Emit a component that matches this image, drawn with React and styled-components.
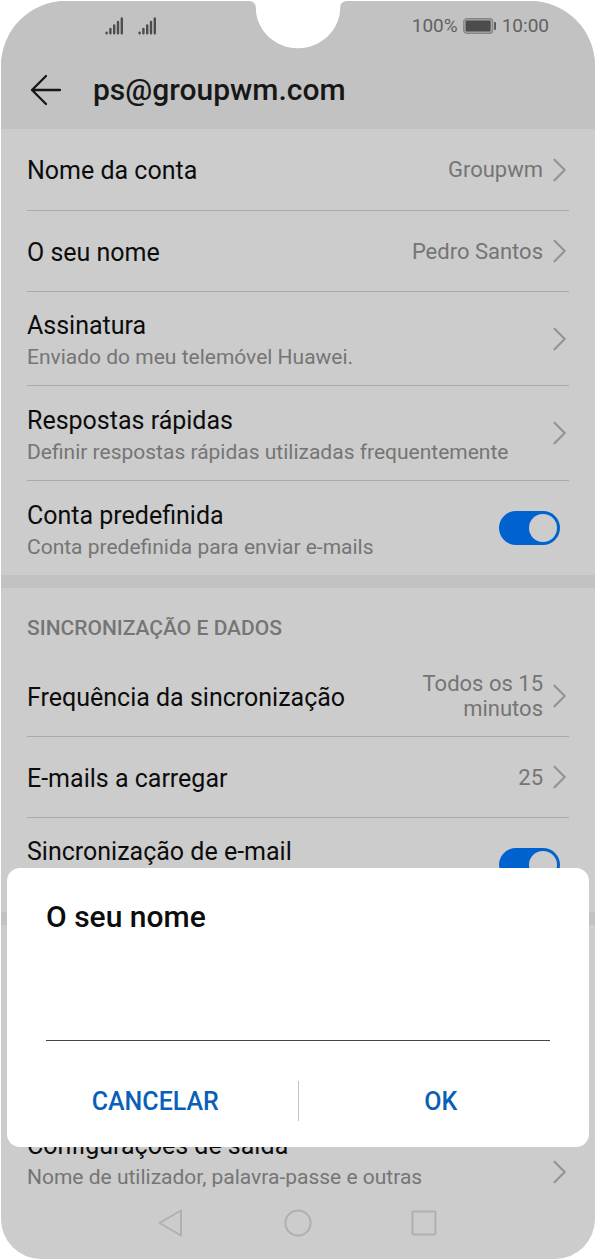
import React, { useState } from "react";
import styled, { createGlobalStyle } from "styled-components";

const Global = createGlobalStyle`
  * { box-sizing: border-box; }
  body { margin: 0; background: #fff; font-family: Roboto, "Liberation Sans", sans-serif; }
  button, input { font: inherit; }
  button { border: 0; background: none; padding: 0; color: inherit; cursor: pointer; }
  svg { display: block; flex: none; }
`;

const Phone = styled.div`
  position: relative;
  display: flex;
  flex-direction: column;
  height: calc(100vh - 2px);
  margin: 1px;
  overflow: hidden;
  background: #ccc;
  border-radius: 65px 65px 40px 40px;
`;

const Top = styled.header`
  flex: none;
  background: #c2c2c2;
`;

const StatusBar = styled.div`
  display: flex;
  align-items: center;
  justify-content: space-between;
  height: 49px;
  padding: 0 46px 0 104px;
  font-size: 19px;
  line-height: 24px;
  color: #616161;
`;

const StatusGroup = styled.div`
  display: flex;
  align-items: center;
  gap: ${(p) => p.$gap}px;
`;

const Notch = styled.div`
  position: absolute;
  top: -1px;
  left: 0;
  right: 0;
  display: flex;
  justify-content: center;
`;

const TitleBar = styled.div`
  display: flex;
  align-items: center;
  gap: 31px;
  height: 79px;
  padding: 0 29px;
`;

const PageTitle = styled.h1`
  margin: 0;
  font-size: 30px;
  line-height: 36px;
  font-weight: 500;
  color: #171717;
`;

const Scroll = styled.main`
  flex: 1;
  min-height: 0;
  overflow: hidden;
`;

const Section = styled.section`
  padding: 0 26px;
  border-bottom: ${(p) => (p.$last ? 0 : 13)}px solid #c2c2c2;
`;

const SectionTitle = styled.h2`
  margin: 0;
  padding: 26px 0 14px;
  min-height: 68px;
  font-size: 21px;
  line-height: 28px;
  font-weight: 500;
  color: #757575;
`;

const RowButton = styled.button`
  display: flex;
  align-items: center;
  gap: 10px;
  width: 100%;
  min-height: ${(p) => p.$height || 81}px;
  padding: 15px 3px 15px 0;
  border-bottom: ${(p) => (p.$plain ? 0 : 1)}px solid #aaa;
  text-align: left;
`;

const SwitchRow = styled(RowButton).attrs({ as: "label" })`
  padding-right: 9px;
`;

const Texts = styled.span`
  flex: 1;
  align-self: ${(p) => (p.$top ? "flex-start" : "center")};
  display: flex;
  flex-direction: column;
  gap: 3px;
`;

const Label = styled.span`
  padding-top: 3px;
  font-size: 25px;
  line-height: 32px;
  color: #0c0c0c;
`;

const Sub = styled.span`
  font-size: 21px;
  line-height: 25px;
  color: #757575;
`;

const Value = styled(Sub)`
  max-width: 140px;
  font-size: 22px;
  text-align: right;
`;

const Toggle = styled.input.attrs({ type: "checkbox" })`
  appearance: none;
  flex: none;
  width: 61px;
  height: 34px;
  margin: 0;
  padding: 3px;
  display: flex;
  justify-content: flex-start;
  border-radius: 17px;
  background: #9a9a9a;
  &::before {
    content: "";
    width: 28px;
    height: 28px;
    border-radius: 50%;
    background: #ccc;
  }
  &:checked { background: #0062cf; justify-content: flex-end; }
`;

const HiddenRowSpace = styled.div`
  height: 119px;
`;

const NavBar = styled.nav`
  flex: none;
  display: flex;
  align-items: center;
  justify-content: center;
  gap: 98px;
  height: 72px;
`;

const Dialog = styled.form`
  position: absolute;
  left: 6px;
  right: 6px;
  bottom: 112px;
  padding: 31px 0 26px;
  border-radius: 13px;
  background: #fff;
`;

const DialogTitle = styled.label`
  display: block;
  padding: 0 39px;
  font-size: 30px;
  line-height: 36px;
  font-weight: 500;
  color: #0c0c0c;
`;

const Field = styled.div`
  padding: 56px 39px 40px;
`;

const NameInput = styled.input`
  display: block;
  width: 100%;
  height: 50px;
  padding: 0;
  border: 0;
  border-bottom: 1px solid #444;
  border-radius: 0;
  outline: 0;
  background: none;
  font-size: 25px;
`;

const Actions = styled.div`
  display: flex;
  height: 40px;
  padding: 0 6px;
`;

const Action = styled.button`
  flex: 1;
  padding-top: 2px;
  font-size: 25px;
  line-height: 32px;
  font-weight: 500;
  color: #0a5fb8;
  & + & { border-left: 1px solid #c2c2c2; }
`;

const Signal = () => (
  <svg width="19" height="18" viewBox="0 0 19 18" stroke="#4d4d4d" strokeWidth="2.4" strokeLinecap="round">
    <path d="M1.6 15.6v.6M5.4 12v4.2M9.2 8.4v7.8M13 5v11.2M16.8 1.5v14.7" />
  </svg>
);

const Battery = () => (
  <svg width="34" height="16" viewBox="0 0 34 16">
    <rect x="0.7" y="0.7" width="29" height="14.6" rx="3" fill="#a6a6a6" stroke="#858585" strokeWidth="1.2" />
    <rect x="2.6" y="2.6" width="25" height="10.8" rx="0.8" fill="#4c4c4c" />
    <rect x="31" y="4" width="2" height="8" rx="0.8" fill="#5c5c5c" />
  </svg>
);

const BackArrow = () => (
  <svg width="32" height="32" viewBox="0 0 32 32" fill="none" stroke="#171717" strokeWidth="2.3" strokeLinecap="round" strokeLinejoin="round">
    <path d="M30 16H2M16 2L2 16l14 14" />
  </svg>
);

const Chevron = () => (
  <svg width="13" height="24" viewBox="0 0 13 24" fill="none" stroke="#949494" strokeWidth="2.2" strokeLinecap="round" strokeLinejoin="round">
    <path d="M1.5 1.7L11.7 12 1.5 22.3" />
  </svg>
);

function Row({ label, sub, value, ...rest }) {
  return (
    <RowButton type="button" {...rest}>
      <Texts>
        <Label>{label}</Label>
        {sub && <Sub>{sub}</Sub>}
      </Texts>
      {value && <Value>{value}</Value>}
      <Chevron />
    </RowButton>
  );
}

export default function App() {
  const [isDefault, setDefault] = useState(true);
  const [sync, setSync] = useState(true);
  const [name, setName] = useState("");
  return (
    <>
      <Global />
      <Phone>
        <Top>
          <StatusBar>
            <StatusGroup $gap={14}>
              <Signal />
              <Signal />
            </StatusGroup>
            <StatusGroup $gap={5}>
              <span>100%</span>
              <Battery />
              <span>10:00</span>
            </StatusGroup>
          </StatusBar>
          <TitleBar>
            <button type="button" aria-label="Voltar"><BackArrow /></button>
            <PageTitle>ps@groupwm.com</PageTitle>
          </TitleBar>
        </Top>
        <Notch>
          <svg width="100" height="49" viewBox="0 0 100 49">
            <path d="M0 0V1C5 1 7.8 3 7.8 8C8 30 27 48.3 50 48.3S92 30 92.2 8C92.2 3 95 1 100 1V0Z" fill="#fff" />
          </svg>
        </Notch>
        <Scroll>
          <Section>
            <Row label="Nome da conta" value="Groupwm" $height={82} />
            <Row label="O seu nome" value="Pedro Santos" />
            <Row label="Assinatura" sub="Enviado do meu telemóvel Huawei." $height={94} />
            <Row label="Respostas rápidas" sub="Definir respostas rápidas utilizadas frequentemente" $height={95} />
            <SwitchRow $height={94} $plain>
              <Texts>
                <Label>Conta predefinida</Label>
                <Sub>Conta predefinida para enviar e-mails</Sub>
              </Texts>
              <Toggle checked={isDefault} onChange={(e) => setDefault(e.target.checked)} />
            </SwitchRow>
          </Section>
          <Section>
            <SectionTitle>SINCRONIZAÇÃO E DADOS</SectionTitle>
            <Row label="Frequência da sincronização" value="Todos os 15 minutos" />
            <Row label="E-mails a carregar" value="25" />
            <SwitchRow $height={94} $plain>
              <Texts $top>
                <Label>Sincronização de e-mail</Label>
              </Texts>
              <Toggle checked={sync} onChange={(e) => setSync(e.target.checked)} />
            </SwitchRow>
          </Section>
          <Section $last>
            <SectionTitle as="div" />
            <HiddenRowSpace />
            <RowButton type="button" $height={119} $plain>
              <Texts $top>
                <Label>Configurações de saída</Label>
                <Sub>Nome de utilizador, palavra-passe e outras</Sub>
              </Texts>
              <Chevron />
            </RowButton>
          </Section>
        </Scroll>
        <NavBar>
          <button type="button" aria-label="Anterior">
            <svg width="28" height="28" viewBox="0 0 28 28" fill="none" stroke="#b0b0b0" strokeWidth="2" strokeLinejoin="round">
              <path d="M23 1.5v25L1.5 14Z" />
            </svg>
          </button>
          <button type="button" aria-label="Início">
            <svg width="28" height="28" viewBox="0 0 28 28" fill="none" stroke="#b0b0b0" strokeWidth="2">
              <circle cx="14" cy="14" r="12.6" />
            </svg>
          </button>
          <button type="button" aria-label="Recentes">
            <svg width="28" height="28" viewBox="0 0 28 28" fill="none" stroke="#b0b0b0" strokeWidth="2" strokeLinejoin="round">
              <rect x="2.4" y="2.4" width="23" height="23" rx="0.8" />
            </svg>
          </button>
        </NavBar>
        <Dialog onSubmit={(e) => e.preventDefault()}>
          <DialogTitle htmlFor="name">O seu nome</DialogTitle>
          <Field>
            <NameInput id="name" type="text" value={name} onChange={(e) => setName(e.target.value)} />
          </Field>
          <Actions>
            <Action type="button">CANCELAR</Action>
            <Action type="submit">OK</Action>
          </Actions>
        </Dialog>
      </Phone>
    </>
  );
}
